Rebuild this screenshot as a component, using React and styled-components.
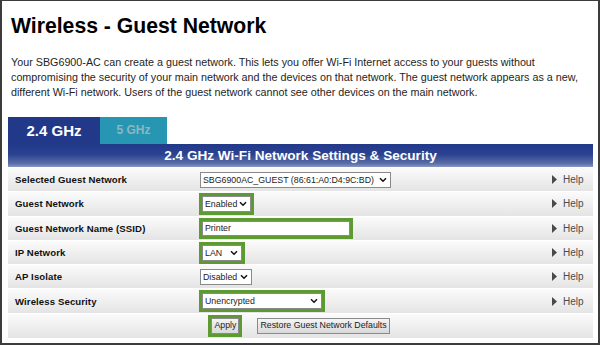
import styled, { createGlobalStyle } from "styled-components";

const GlobalStyle = createGlobalStyle`
	html, body {
		margin: 0;
		padding: 0;
		background: #ffffff;
	}
	body {
		font-family: "Liberation Sans", Arial, sans-serif;
	}
`;

const ROWS = [
	{ label: "Selected Guest Network", kind: "select", value: "SBG6900AC_GUEST (86:61:A0:D4:9C:BD)", width: 191 },
	{ label: "Guest Network", kind: "select", value: "Enabled", width: 49, mark: true },
	{ label: "Guest Network Name (SSID)", kind: "input", value: "Printer", width: 148, mark: true },
	{ label: "IP Network", kind: "select", value: "LAN", width: 40, mark: true },
	{ label: "AP Isolate", kind: "select", value: "Disabled", width: 52 },
	{ label: "Wireless Security", kind: "select", value: "Unencrypted", width: 120, mark: true },
];

const INTRO = [
	"Your SBG6900-AC can create a guest network. This lets you offer Wi-Fi Internet access to your guests without",
	"compromising the security of your main network and the devices on that network. The guest network appears as a new,",
	"different Wi-Fi network. Users of the guest network cannot see other devices on the main network.",
];

const Chevron = () => (
	<svg width="8" height="6" viewBox="0 0 8 6">
		<path d="M1 1.2 L4 4.2 L7 1.2" fill="none" stroke="#111" strokeWidth="1.5" />
	</svg>
);

const HelpArrow = () => (
	<svg width="5" height="9" viewBox="0 0 5 9">
		<path d="M0 0 L5 4.5 L0 9 Z" fill="#4a4a4a" />
	</svg>
);

const App = () => {
	return (
		<>
			<GlobalStyle />
			<Frame>
				<Title>Wireless - Guest Network</Title>
				<Intro>
					{INTRO.map((line) => (
						<Line key={line}>{line}</Line>
					))}
				</Intro>
				<Tabs>
					<Tab active>2.4 GHz</Tab>
					<Tab>5 GHz</Tab>
				</Tabs>
				<Panel>
					<PanelHead>2.4 GHz Wi-Fi Network Settings &amp; Security</PanelHead>
					{ROWS.map((row) => (
						<Row key={row.label}>
							<Label>{row.label}</Label>
							<Cell>
								{row.kind === "input" ? (
									<TextBox mark={row.mark} style={{ width: row.width }}>
										{row.value}
									</TextBox>
								) : (
									<SelectBox mark={row.mark} style={{ width: row.width }}>
										<span>{row.value}</span>
										<Chevron />
									</SelectBox>
								)}
							</Cell>
							<Help>
								<HelpArrow />
								<span>Help</span>
							</Help>
						</Row>
					))}
					<ActionRow>
						<Button mark>Apply</Button>
						<Button>Restore Guest Network Defaults</Button>
					</ActionRow>
				</Panel>
			</Frame>
		</>
	);
};
export default App;

const Frame = styled.div`
	width: 600px;
	height: 345px;
	box-sizing: border-box;
	border: 2px solid #3c3c3c;
	border-top-width: 1px;
	padding: 11px 5px 0 6px;
	overflow: hidden;
	color: #1a1a1a;
`;

const Title = styled.h1`
	margin: 0 0 0 3px;
	font-size: 21.2px;
	line-height: 28px;
	font-weight: 700;
	color: #000;
`;

const Intro = styled.div`
	margin: 15px 0 0 3px;
	font-size: 10.75px;
	line-height: 15px;
	color: #1e1e1e;
`;

const Line = styled.div`
	white-space: nowrap;
`;

const Tabs = styled.div`
	display: flex;
	margin-top: 17px;
	height: 27px;
`;

const Tab = styled.div`
	width: ${(p) => (p.active ? "92px" : "67px")};
	height: 27px;
	display: flex;
	align-items: center;
	justify-content: center;
	font-weight: 700;
	font-size: ${(p) => (p.active ? "15px" : "12px")};
	color: ${(p) => (p.active ? "#ffffff" : "#8cb7c2")};
	background: ${(p) => (p.active ? "#22398a" : "#2796b2")};
	padding-bottom: 1px;
	box-sizing: border-box;
`;

const Panel = styled.div`
	width: 585px;
	display: flex;
	flex-direction: column;
	gap: 1px;
	background: #ffffff;
`;

const PanelHead = styled.div`
	height: 23px;
	display: flex;
	align-items: center;
	justify-content: center;
	font-size: 13.6px;
	font-weight: 700;
	color: #ffffff;
	background: linear-gradient(#22398a 0%, #2a4290 45%, #5b6ea8 85%, #8896c0 100%);
`;

const Row = styled.div`
	height: 23.3px;
	display: grid;
	grid-template-columns: 192px 1fr 41px;
	align-items: center;
	background: linear-gradient(#fbfbfb, #e4e4e4);
`;

const Label = styled.div`
	padding-left: 7px;
	font-size: 9.6px;
	font-weight: 700;
	color: #111;
	letter-spacing: 0.1px;
`;

const Cell = styled.div`
	display: flex;
	align-items: center;
`;

const SelectBox = styled.div`
	height: 16px;
	box-sizing: border-box;
	display: flex;
	align-items: center;
	justify-content: space-between;
	padding: 0 3px 0 2px;
	border: 1px solid #8a8a8a;
	background: #ffffff;
	font-size: 8.8px;
	color: #222;
	white-space: nowrap;
	outline: ${(p) => (p.mark ? "3px solid #5d9a32" : "none")};
	margin-left: ${(p) => (p.mark ? "2px" : "0")};
`;

const TextBox = styled.div`
	height: 15px;
	box-sizing: border-box;
	display: flex;
	align-items: center;
	padding: 0 2px;
	border: 1px solid #8a8a8a;
	background: #ffffff;
	font-size: 8.8px;
	color: #222;
	outline: ${(p) => (p.mark ? "3px solid #5d9a32" : "none")};
	margin-left: ${(p) => (p.mark ? "2px" : "0")};
`;

const Help = styled.div`
	display: flex;
	align-items: center;
	gap: 6px;
	font-size: 10px;
	color: #4a4a4a;
`;

const ActionRow = styled.div`
	height: 24px;
	display: flex;
	align-items: center;
	justify-content: center;
	gap: 18px;
	background: linear-gradient(#fbfbfb, #e4e4e4);
`;

const Button = styled.button`
	height: 16px;
	padding: 0 2px;
	font-family: "Liberation Sans", Arial, sans-serif;
	font-size: 8.8px;
	color: #222;
	border: 1px solid #8a8a8a;
	border-radius: 0;
	background: linear-gradient(#f4f4f4, #d9d9d9);
	line-height: 13px;
	outline: ${(p) => (p.mark ? "3px solid #5d9a32" : "none")};
`;
